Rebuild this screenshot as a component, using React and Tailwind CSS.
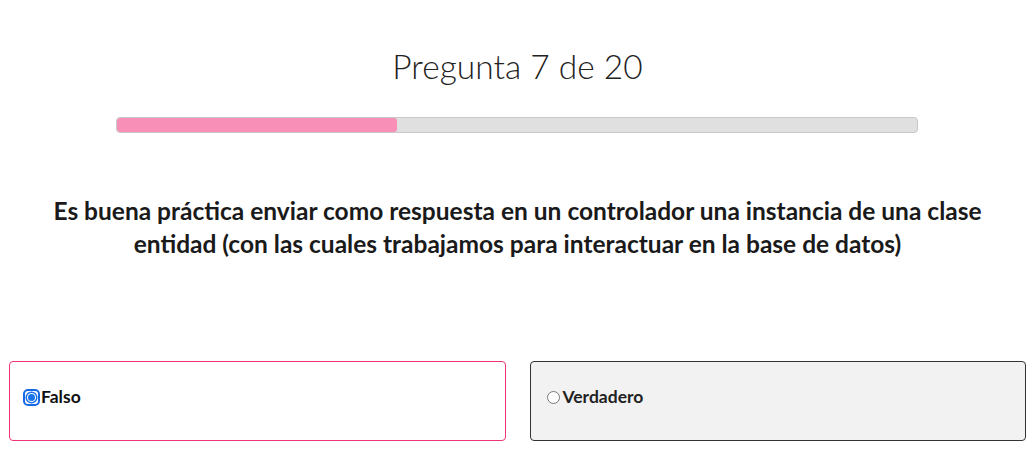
export default function App() {
  const progress = 35;

  return (
    <div className="min-h-[460px] bg-white px-[9px] font-['Lato',sans-serif] text-[#111]">
      <h1 className="pt-[44px] text-center text-[33.5px] font-light leading-[44px] text-[#222]">
        Pregunta 7 de 20
      </h1>

      <div className="mx-auto mt-[29px] h-[16px] w-[802px] -translate-x-[1px] overflow-hidden rounded-[4px] border border-[#c8c8c8] bg-[#e0e0e0]">
        <div className="h-full rounded-[3px] bg-[#f78fb6]" style={{ width: `${progress}%` }} />
      </div>

      <p className="mx-auto mt-[61px] max-w-[950px] text-center text-[24.5px] font-bold leading-[33px] text-[#1a1a1a]">
        Es buena práctica enviar como respuesta en un controlador una instancia de una clase entidad (con las cuales trabajamos para interactuar en la base de datos)
      </p>

      <div className="mt-[101px] grid grid-cols-2 gap-[24px]">
        <label className="flex h-[80px] items-center rounded-[4px] border border-[#f0347a] bg-white px-[13px] pb-[8px]">
          <input type="radio" name="answer" defaultChecked className="sr-only" />
          <svg width="17" height="17" viewBox="0 0 17 17" className="shrink-0">
            <rect x="1" y="1" width="15" height="15" rx="4" fill="white" stroke="#1769e6" strokeWidth="2" />
            <circle cx="8.5" cy="8.5" r="5.3" fill="white" stroke="#1a73e8" strokeWidth="1.5" />
            <circle cx="8.5" cy="8.5" r="3.5" fill="#1a73e8" />
          </svg>
          <span className="ml-[1px] text-[17.5px] font-bold">Falso</span>
        </label>
        <label className="flex h-[80px] items-center rounded-[4px] border border-[#333] bg-[#f2f2f2] px-[11px] pb-[8px]">
          <input type="radio" name="answer" className="ml-[5px] mr-[3px] h-[13px] w-[13px]" />
          <span className="text-[17.5px] font-bold text-[#222]">Verdadero</span>
        </label>
      </div>
    </div>
  );
}
